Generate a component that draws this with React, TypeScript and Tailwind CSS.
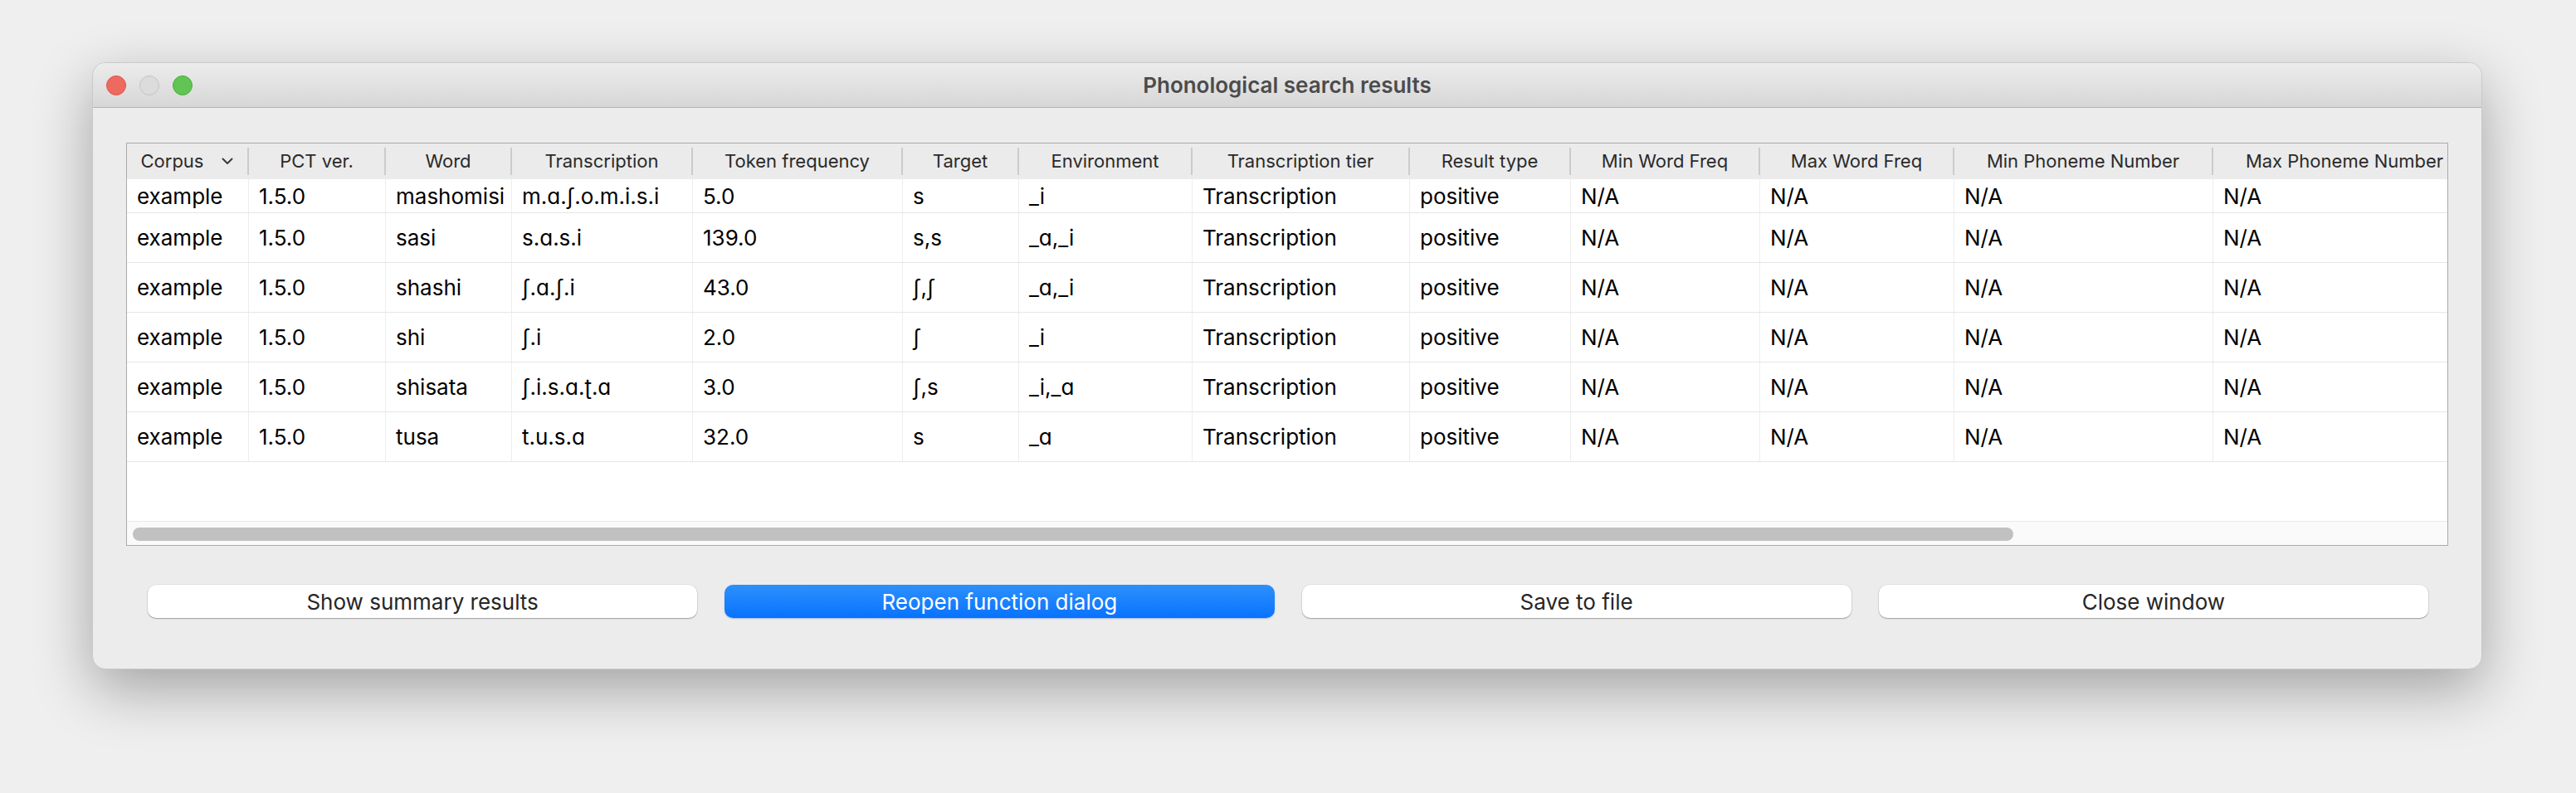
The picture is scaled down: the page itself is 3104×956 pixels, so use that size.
import React from 'react';

const columns = [
    { title: 'Corpus', width: 147 },
    { title: 'PCT ver.', width: 165 },
    { title: 'Word', width: 152 },
    { title: 'Transcription', width: 218 },
    { title: 'Token frequency', width: 253 },
    { title: 'Target', width: 140 },
    { title: 'Environment', width: 209 },
    { title: 'Transcription tier', width: 262 },
    { title: 'Result type', width: 194 },
    { title: 'Min Word Freq', width: 228 },
    { title: 'Max Word Freq', width: 234 },
    { title: 'Min Phoneme Number', width: 312 },
    { title: 'Max Phoneme Number', width: 318 },
];

const rows = [
    ['mashomisi', 'm.ɑ.ʃ.o.m.i.s.i', '5.0', 's', '_i'],
    ['sasi', 's.ɑ.s.i', '139.0', 's,s', '_ɑ,_i'],
    ['shashi', 'ʃ.ɑ.ʃ.i', '43.0', 'ʃ,ʃ', '_ɑ,_i'],
    ['shi', 'ʃ.i', '2.0', 'ʃ', '_i'],
    ['shisata', 'ʃ.i.s.ɑ.ʈ.ɑ', '3.0', 'ʃ,s', '_i,_ɑ'],
    ['tusa', 't.u.s.ɑ', '32.0', 's', '_ɑ'],
];

const font = { fontFamily: 'Inter, "DejaVu Sans", sans-serif' };
const template = columns.map(c => `${c.width}px`).join(' ');

function TrafficLights() {
    return (
        <div className="flex items-center gap-[16px] pl-[16px]">
            <span className="w-[24px] h-[24px] rounded-full bg-[#ee6a5f] border border-[#d8564c]" />
            <span className="w-[24px] h-[24px] rounded-full bg-[#dcdcdc] border border-[#c4c4c4]" />
            <span className="w-[24px] h-[24px] rounded-full bg-[#61c454] border border-[#4faa3f]" />
        </div>
    );
}

function HeaderCell({ title, first }: { title: string; first?: boolean }) {
    return (
        <div className="flex h-full min-w-0">
            <div className="flex-1 min-w-0 flex items-center justify-center gap-[22px] whitespace-nowrap text-[22px] text-[#2a2a2a]">
                <span>{title}</span>
                {first && (
                    <svg width="14" height="9" viewBox="0 0 14 9" fill="none">
                        <path d="M1.5 1.5 L7 7 L12.5 1.5" stroke="#3a3a3a" strokeWidth="2" strokeLinecap="round" strokeLinejoin="round" />
                    </svg>
                )}
            </div>
            <div className="w-[2px] my-[5px] bg-[#cbcbcb] shrink-0" />
        </div>
    );
}

function BodyRow({ cells, tall }: { cells: string[]; tall: boolean }) {
    return (
        <div
            className={`grid border-b border-[#e6e6e6] ${tall ? 'h-[60px]' : 'h-[41px]'}`}
            style={{ gridTemplateColumns: template }}
        >
            {cells.map((cell, i) => (
                <div
                    key={i}
                    className="flex items-center pl-[12px] border-r border-[#ededed] whitespace-nowrap text-[26px] text-black"
                >
                    {cell}
                </div>
            ))}
        </div>
    );
}

export default function App() {
    const whiteBtn =
        'flex-1 h-[40px] rounded-[10px] bg-white text-[26px] text-[#262626] shadow-[0_1px_1.5px_rgba(0,0,0,0.3),0_0_0_0.5px_rgba(0,0,0,0.08)]';

    return (
        <div className="w-[3104px] h-[956px] bg-[#efefef] pt-[75px] pl-[111px] overflow-hidden" style={font}>
            <div className="w-[2880px] rounded-[16px] bg-[#ececec] border border-[#c9c9c9] shadow-[0_24px_70px_rgba(0,0,0,0.32)] overflow-hidden">
                {/* Title bar */}
                <div className="h-[54px] grid grid-cols-[1fr_auto_1fr] items-center bg-gradient-to-b from-[#ececec] to-[#d7d7d7] border-b border-[#b4b4b4]">
                    <TrafficLights />
                    <div className="text-[26px] font-semibold text-[#4b4b4b]">Phonological search results</div>
                    <div />
                </div>

                <div className="pt-[42px] px-[40px]">
                    {/* Table */}
                    <div className="h-[486px] border border-[#ababab] bg-white flex flex-col overflow-hidden">
                        <div className="w-max">
                            <div className="grid h-[43px] bg-[#ebebeb]" style={{ gridTemplateColumns: template }}>
                                {columns.map((c, i) => (
                                    <HeaderCell key={c.title} title={c.title} first={i === 0} />
                                ))}
                            </div>
                            {rows.map((r, i) => (
                                <BodyRow
                                    key={i}
                                    tall={i > 0}
                                    cells={[
                                        'example',
                                        '1.5.0',
                                        r[0],
                                        r[1],
                                        r[2],
                                        r[3],
                                        r[4],
                                        'Transcription',
                                        'positive',
                                        'N/A',
                                        'N/A',
                                        'N/A',
                                        'N/A',
                                    ]}
                                />
                            ))}
                        </div>
                        <div className="flex-1" />
                        {/* Horizontal scrollbar */}
                        <div className="h-[29px] shrink-0 bg-[#fafafa] border-t border-[#e8e8e8] pt-[7px] pl-[7px]">
                            <div className="w-[2266px] h-[16px] rounded-full bg-[#c1c1c1]" />
                        </div>
                    </div>

                    {/* Buttons */}
                    <div className="flex gap-[33px] pl-[26px] pr-[24px] mt-[47px] mb-[61px]">
                        <button className={whiteBtn}>Show summary results</button>
                        <button className="flex-1 h-[40px] rounded-[10px] bg-gradient-to-b from-[#2c90fb] to-[#0672ff] text-[26px] text-white shadow-[0_1px_1.5px_rgba(0,80,200,0.3)]">
                            Reopen function dialog
                        </button>
                        <button className={whiteBtn}>Save to file</button>
                        <button className={whiteBtn}>Close window</button>
                    </div>
                </div>
            </div>
        </div>
    );
}
